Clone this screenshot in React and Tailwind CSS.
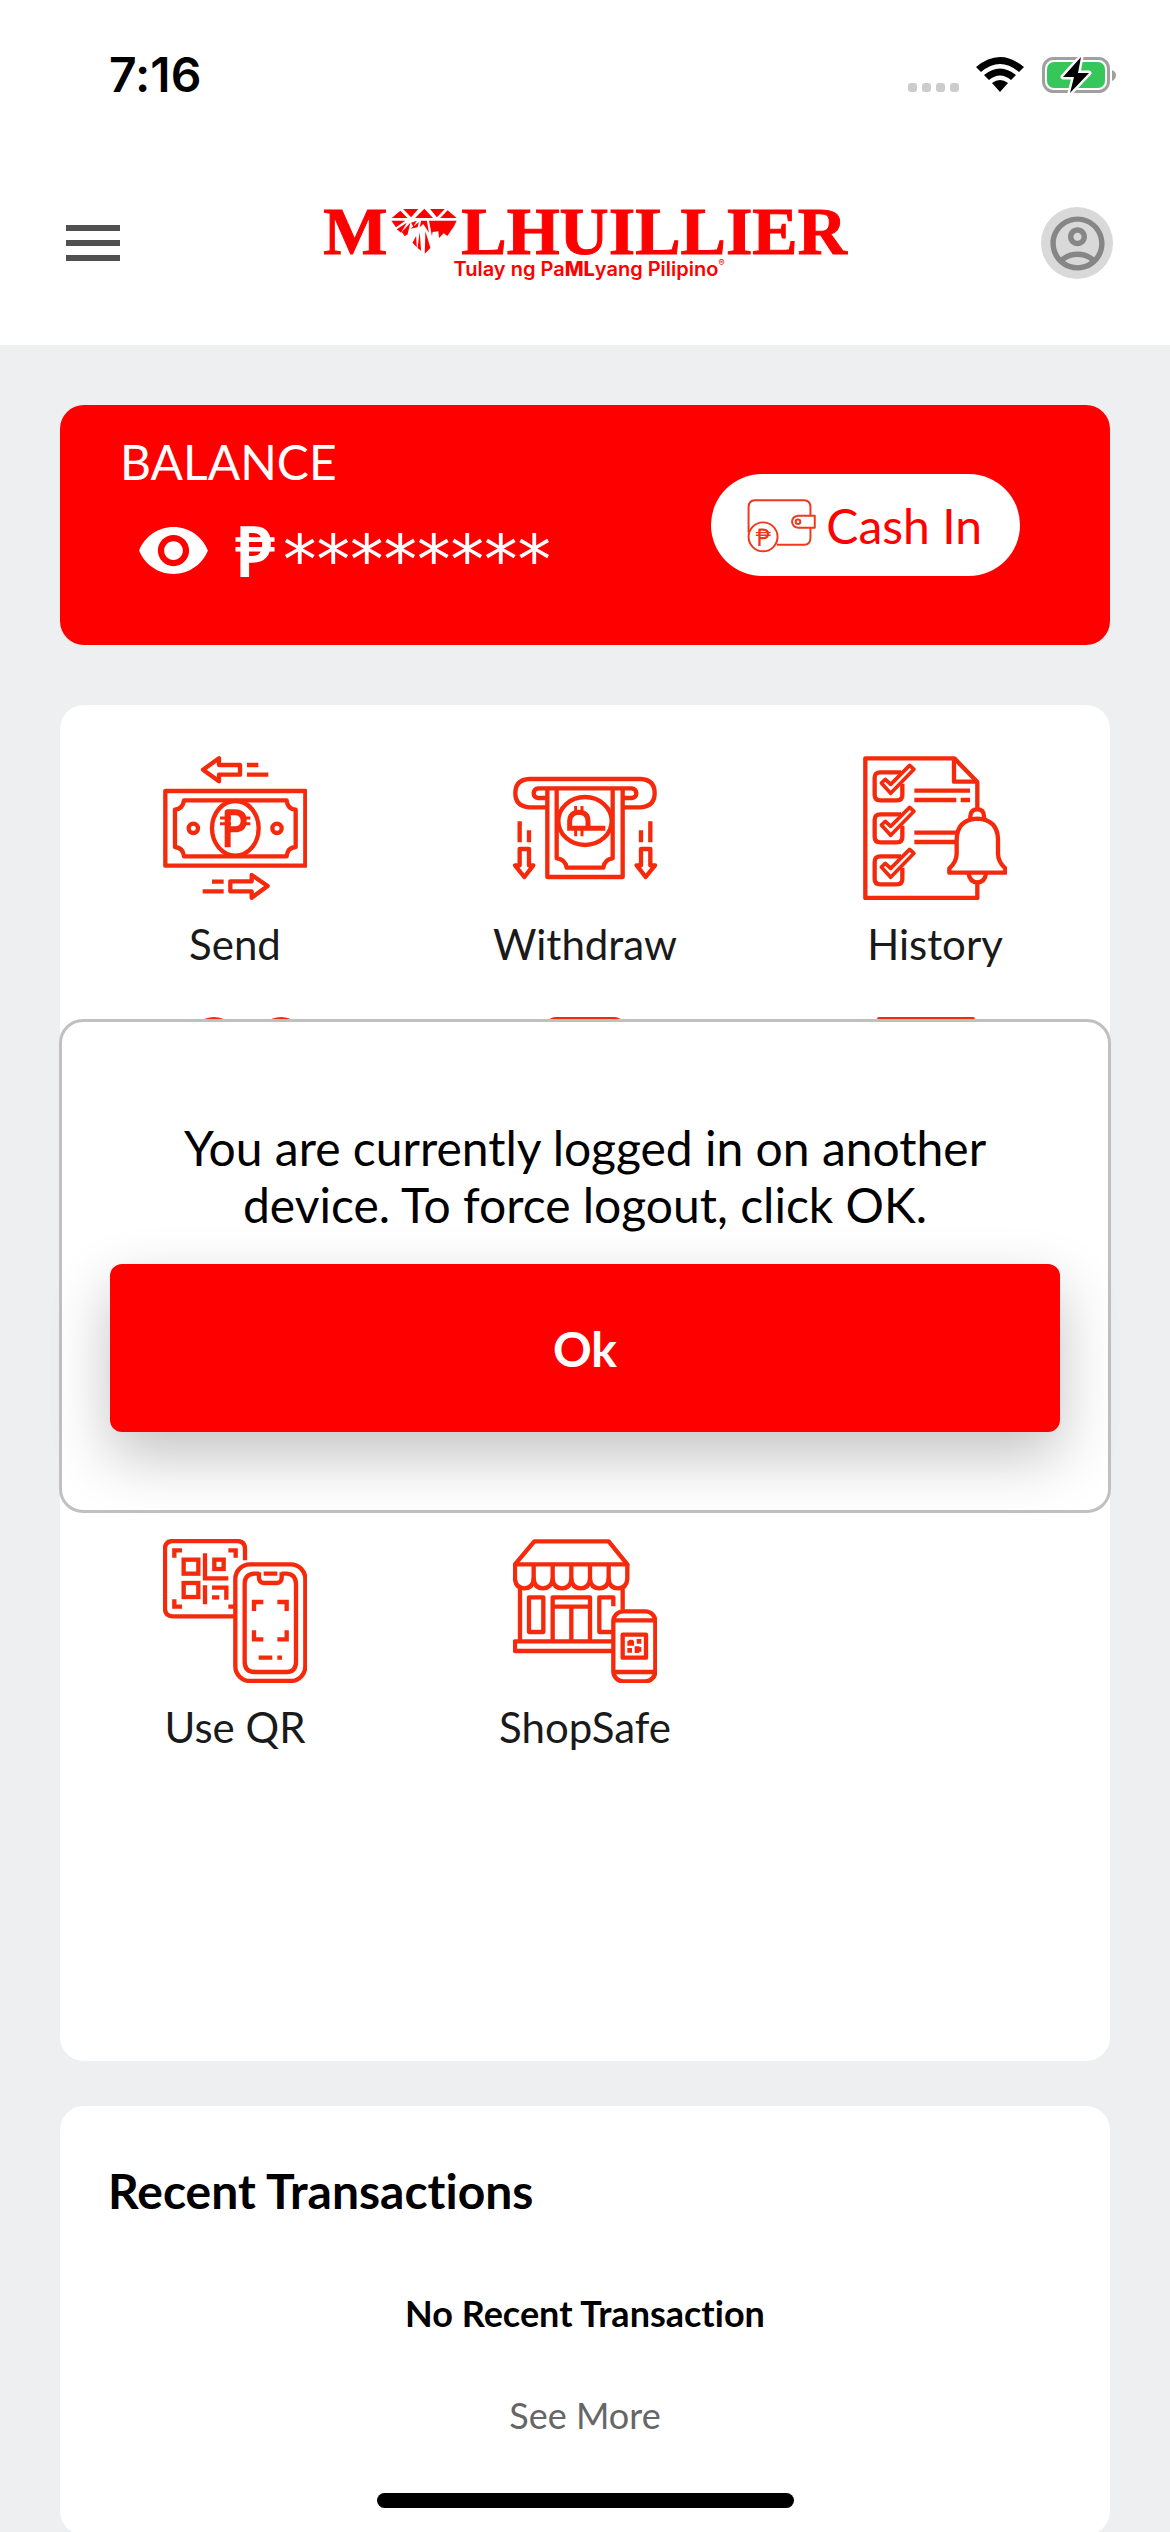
import { MdMenu, MdOutlineAccountCircle, MdVisibility } from "react-icons/md";

const line = {
  fill: "none",
  stroke: "#f52a0c",
  strokeWidth: 13,
  strokeLinejoin: "round",
};

function SendIcon() {
  return (
    <svg viewBox="68 77 432 432" className="size-36" aria-hidden="true" {...line}>
      <path d="M188 118 L236 84 V104 H299 V133 H236 V153 Z" />
      <path d="M320 104 H354 M320 133 H384" />
      <rect x="75" y="182" width="420" height="224" />
      <path d="M131 210 H439 Q441 236 466 238 V350 Q441 352 439 378 H131 Q128 352 104 350 V238 Q128 236 131 210 Z" />
      <ellipse cx="285" cy="294" rx="70" ry="82" />
      <circle cx="159" cy="294" r="14" />
      <circle cx="410" cy="294" r="14" />
      <path strokeWidth="18" d="M262 351 V246 H283 Q310 246 310 272 Q310 297 283 297 H262" />
      <path strokeWidth="9" d="M239 263 H272 M239 280 H272 M302 263 H330 M302 280 H330" />
      <path d="M270 453 H334 V434 L382 467 L334 502 V483 H270 Z" />
      <path d="M215 454 H250 M187 483 H250" />
    </svg>
  );
}

function WithdrawIcon() {
  return (
    <svg viewBox="129 77 432 432" className="size-36" aria-hidden="true" {...line}>
      <path d="M232 231 H178 Q136 228 136 188 Q136 148 178 146 H512 Q554 148 554 188 Q554 228 512 231 H459" />
      <path d="M232 203 H205 Q191 202 191 188 Q192 175 205 174 H485 Q498 175 499 188 Q499 202 485 203 H459" />
      <path d="M232 178 V440 H458 V178 M260 178 V384 Q286 386 290 412 H400 Q404 386 428 384 V178" />
      <ellipse cx="345" cy="272" rx="80" ry="72" />
      <path strokeWidth="15" strokeLinejoin="miter" d="M406 294 H299 V272 Q300 247 327 246 Q354 247 354 272 V294" />
      <path strokeWidth="9" d="M317 227 V246 M336 227 V246 M317 296 V318 M336 296 V318" />
      <path d="M149 273 V336 M177 300 V336 M541 273 V336 M513 300 V336" />
      <path d="M149 356 H177 V405 H190 L163 440 L135 405 H149 Z" />
      <path d="M513 356 H541 V405 H555 L527 440 L500 405 H513 Z" />
    </svg>
  );
}

function HistoryIcon() {
  return (
    <svg viewBox="98 77 432 432" className="size-36" aria-hidden="true" {...line}>
      <path d="M441 236 V155 L372 84 H105 V503 H441 V456" />
      <path d="M371 84 V154 H441" />
      <path d="M252 181 H419 M252 209 H378 M391 209 H419 M252 307 H377 M252 335 H374" />
      {[0, 126, 252].map((y) => (
        <g key={y} transform={`translate(0 ${y})`}>
          <path d="M212 126 H150 Q133 126 133 142 V194 Q133 210 150 210 H200 Q216 210 216 194 V160" />
          <path fill="#fff" strokeWidth="11" d="M153 158 L165 147 L181 162 L238 105 L251 117 L181 189 Z" />
        </g>
      ))}
      <path d="M420 263 V258 Q421 237 441 237 Q461 237 461 258 V263" />
      <path
        fill="#fff"
        d="M357 427 V414 Q379 394 379 370 V326 Q381 268 441 265 Q501 268 503 326 V370 Q503 394 525 414 V427 Z"
      />
      <path d="M415 430 Q418 455 441 456 Q464 455 467 430" />
    </svg>
  );
}

function UseQrIcon() {
  return (
    <svg viewBox="68 86 432 432" className="size-36" aria-hidden="true" {...line}>
      <path d="M314 150 V114 Q313 93 292 92 H96 Q75 93 74 114 V296 Q75 317 96 318 H282" />
      <g strokeLinejoin="miter">
        <path d="M102 142 V120 H125 M264 120 H286 V142 M102 267 V289 H125 M264 289 H282" />
        <rect x="130" y="148" width="44" height="42" />
        <rect x="130" y="218" width="44" height="42" />
        <rect x="222" y="148" width="28" height="28" />
        <path d="M194 129 V204 H264 M194 225 V282 M215 232 H258 V268 M215 261 H237" />
      </g>
      <rect x="285" y="162" width="210" height="350" rx="44" />
      <path d="M356 190 H342 Q313 192 313 220 V456 Q314 484 342 485 H440 Q466 484 467 456 V220 Q466 192 440 190 H424" />
      <path d="M356 186 V204 Q357 217 370 218 H410 Q423 217 424 204 V186 M370 190 H411" />
      <path strokeLinejoin="miter" d="M341 302 V275 H369 M411 275 H439 V302 M341 360 V387 H369 M411 387 H439 V360 M355 442 H396 M411 442 H425" />
    </svg>
  );
}

function ShopSafeIcon() {
  return (
    <svg viewBox="98 86 432 432" className="size-36" aria-hidden="true" {...line}>
      <path d="M104 162 L162 93 H385 L441 162 Z" />
      <path d="M104 162 V206 Q106 233 132 234 Q158 233 160 206 Q162 233 188 234 Q214 233 217 206 Q219 233 245 234 Q271 233 273 206 Q275 233 301 234 Q327 233 329 206 Q331 233 357 234 Q383 233 385 206 Q387 233 413 234 Q439 233 441 206 V162" />
      <path d="M160 162 V210 M217 162 V210 M273 162 V210 M329 162 V210 M385 162 V210" />
      <path d="M119 234 V390 M427 234 V298" />
      <rect x="146" y="261" width="43" height="104" />
      <path d="M217 390 V261 H329 V390 M217 289 H329 M273 289 V390" />
      <path d="M399 288 V261 H357 V365 H396" />
      <path d="M398 393 H104 V422 H398" />
      <rect x="399" y="303" width="126" height="210" rx="30" />
      <path d="M399 330 H525 M399 485 H525" />
      <rect x="427" y="373" width="70" height="69" />
      <path strokeWidth="14" strokeLinejoin="miter" d="M441 399 H461 M469 393 H483 M441 420 H455 M463 417 H483 M452 388 V406 M470 408 V428" />
    </svg>
  );
}

function PeopleIcon() {
  return (
    <svg viewBox="0 0 144 144" className="size-36" aria-hidden="true" {...line} strokeWidth="4">
      <circle cx="51" cy="22" r="20" />
      <circle cx="118" cy="22" r="20" />
      <path d="M20 140 V80 Q20 56 51 56 Q72 56 84 72 Q96 56 118 56 Q142 56 142 80 V140 Z" />
    </svg>
  );
}

function DeviceIcon() {
  return (
    <svg viewBox="0 0 144 144" className="size-36" aria-hidden="true" {...line} strokeWidth="4">
      <rect x="33" y="2" width="78" height="140" rx="10" />
    </svg>
  );
}

function DocumentIcon() {
  return (
    <svg viewBox="0 0 144 144" className="size-36" aria-hidden="true" {...line} strokeWidth="4">
      <rect x="16" y="2" width="94" height="140" />
    </svg>
  );
}

function WalletIcon() {
  return (
    <svg viewBox="145 113 208 164" className="h-[54px] w-[69px]" aria-hidden="true" {...line} stroke="#f0391c" strokeWidth="6">
      <path d="M149 215 V137 Q150 118 168 117 H318 Q336 118 337 137 V164 M337 201 V232 Q336 251 318 252 H235" />
      <circle cx="193" cy="228" r="44" />
      <path d="M350 164 H300 Q282 166 281 182 Q282 198 300 200 H350 Z" />
      <circle cx="299" cy="182" r="7" />
      <path strokeWidth="7" d="M182 256 V206 H194 Q208 207 208 219 Q208 231 194 232 H182" />
      <path strokeWidth="4" d="M171 215 H216 M171 223 H216" />
    </svg>
  );
}

function Diamond() {
  return (
    <svg viewBox="0 0 184 138" className="h-[46px] w-[66px]" preserveAspectRatio="none" fill="#fe0000" aria-hidden="true">
      <path d="M34 3 H76 L56 28 Z M26 8 L46 30 H2 Z M93 2 L117 30 H67 Z M109 3 H150 L128 28 Z M158 7 L183 30 H137 Z" />
      <path d="M1 38 H40 L14 58 Z M106 38 H183 L176 54 L157 84 L147 76 L134 90 L132 70 L116 72 L114 84 Z" />
      <path d="M16 64 L44 44 L28 74 Z M30 72 L54 44 L46 80 L38 84 Z M56 44 L72 38 L62 56 Z M54 62 L78 42 L74 58 Z M84 38 H100 L106 74 L90 48 L80 58 Z" />
      <path d="M96 70 L110 120 L94 137 Z M80 72 L84 128 L74 120 Z M70 84 L72 118 L60 104 Z" />
    </svg>
  );
}

function Logo() {
  return (
    <div className="flex flex-col items-center text-[#fe0000]">
      <div className="flex h-[52px] items-center gap-1 font-['Liberation_Serif',serif] text-[68px] leading-[52px] font-bold [-webkit-text-stroke:1px_#fe0000]">
        <span>M</span>
        <Diamond />
        <span>LHUILLIER</span>
      </div>
      <p className="flex pl-2 font-['Inter',sans-serif] text-[20px] leading-6 font-semibold">
        <span>
          Tulay ng Pa<b className="font-extrabold">ML</b>yang Pilipino
        </span>
        <span className="text-[9px] leading-3 font-normal">®</span>
      </p>
    </div>
  );
}

function StatusBar() {
  return (
    <div className="flex h-[141px] items-center justify-between pt-2 pr-[53px] pl-[109px]">
      <span className="font-['Inter',sans-serif] text-[48px] leading-[58px] font-semibold">7:16</span>
      <div className="flex items-center">
        <div className="flex gap-[5px] self-end pb-[2px]">
          {[0, 1, 2, 3].map((i) => (
            <span key={i} className="size-[9px] rounded-[3px] bg-[#cccccc]" />
          ))}
        </div>
        <svg viewBox="0 0 48 36" className="ml-[17px] h-9 w-12" aria-hidden="true">
          <path d="M0 10 Q24 -10 48 10 L43 15 Q24 -1 5 15 Z" />
          <path d="M8 18 Q24 5 40 18 L35 23 Q24 14 13 23 Z" />
          <path d="M16 26 Q24 20 32 26 L24 35 Z" strokeLinejoin="round" />
        </svg>
        <svg viewBox="0 0 75 38" className="ml-[18px] h-[38px] w-[75px]" aria-hidden="true">
          <rect x="1.500" y="2.500" width="65" height="33" rx="10" fill="none" stroke="#a0a0a0" strokeWidth="3" />
          <path d="M70 14 Q74 16 74 19 Q74 23 70 25 Z" fill="#a0a0a0" />
          <rect x="5" y="6" width="58" height="26" rx="7" fill="#35c759" />
          <path d="M39 1 L21 21 H32 L28 37 L47 17 H36 Z" stroke="#fff" strokeWidth="5" strokeLinejoin="round" />
          <path d="M39 1 L21 21 H32 L28 37 L47 17 H36 Z" />
        </svg>
      </div>
    </div>
  );
}

function Header() {
  return (
    <header className="shrink-0 bg-white">
      <StatusBar />
      <div className="flex h-[204px] items-center justify-between px-[57px]">
        <button type="button" aria-label="Menu" className="text-[#505050]">
          <MdMenu size={72} />
        </button>
        <Logo />
        <button
          type="button"
          aria-label="Account"
          className="flex size-[72px] items-center justify-center rounded-full bg-[#d9d9d9] text-[#868686]"
        >
          <MdOutlineAccountCircle size={65} />
        </button>
      </div>
    </header>
  );
}

function BalanceCard() {
  return (
    <section className="flex items-center justify-between rounded-3xl bg-[#fe0000] pr-[90px] pl-[60px] text-white">
      <div className="pt-7 pb-14">
        <h2 className="text-[48px] leading-[58px]">BALANCE</h2>
        <div className="flex h-[98px] items-center pt-5 pl-4">
          <button type="button" aria-label="Show balance">
            <MdVisibility size={75} />
          </button>
          <p className="flex items-center gap-2 pl-6 leading-[58px]">
            <span className="font-['Noto_Sans',sans-serif] text-[70px] font-semibold">₱</span>
            <span className="pt-5 font-['DejaVu_Sans',sans-serif] text-[67px]">********</span>
          </p>
        </div>
      </div>
      <button
        type="button"
        className="flex h-[102px] items-center gap-[10px] rounded-full bg-white pt-[2px] pr-[38px] pl-9 text-[48px] leading-[58px] text-[#fe0000]"
      >
        <WalletIcon />
        <span>Cash In</span>
      </button>
    </section>
  );
}

function Service({ icon, label, name, className = "" }) {
  return (
    <button
      type="button"
      aria-label={name}
      className={`flex flex-col items-center gap-[19px] text-[42px] leading-[50px] text-[#1a1a1a] ${className}`}
    >
      {icon}
      {label && <span>{label}</span>}
    </button>
  );
}

function Services() {
  return (
    <section className="mt-[60px] grid grid-cols-3 grid-rows-[repeat(5,261px)] items-start rounded-3xl bg-white pt-[51px]">
      <Service icon={<SendIcon />} label="Send" />
      <Service icon={<WithdrawIcon />} label="Withdraw" />
      <Service icon={<HistoryIcon />} label="History" />
      <Service icon={<PeopleIcon />} name="Service 4" />
      <Service icon={<DeviceIcon />} name="Service 5" />
      <Service icon={<DocumentIcon />} name="Service 6" />
      <Service icon={<UseQrIcon />} label="Use QR" className="row-start-4" />
      <Service icon={<ShopSafeIcon />} label="ShopSafe" className="row-start-4" />
    </section>
  );
}

function RecentTransactions() {
  return (
    <section className="mt-[45px] flex flex-col rounded-3xl bg-white px-12 pt-14 pb-[98px]">
      <h2 className="text-[48px] leading-[58px] font-bold">Recent Transactions</h2>
      <p className="mt-[71px] text-center text-[36px] leading-[44px] font-bold">No Recent Transaction</p>
      <a href="#transactions" className="mt-[58px] self-center text-[36px] leading-[44px] text-[#666666]">
        See More
      </a>
    </section>
  );
}

function LogoutDialog() {
  return (
    <div className="fixed inset-0 flex items-center px-[59px]">
      <div
        role="alertdialog"
        aria-modal="true"
        aria-labelledby="logout-message"
        className="w-full rounded-3xl border-[3px] border-[#c0c0c0] bg-white px-12 pt-[97px] pb-[78px] text-center"
      >
        <p id="logout-message" className="mx-auto max-w-[860px] text-[48px] leading-[57px]">
          You are currently logged in on another device. To force logout, click OK.
        </p>
        <button
          type="button"
          className="mt-[31px] h-[168px] w-full rounded-xl bg-[#fe0000] pt-[2px] text-[48px] leading-[58px] font-bold text-white shadow-[0_24px_60px_rgba(0,0,0,0.24)]"
        >
          Ok
        </button>
      </div>
    </div>
  );
}

export default function App() {
  return (
    <div className="flex h-screen flex-col overflow-hidden bg-[#eeeff1] font-['Lato',sans-serif] text-black [font-variant-ligatures:none]">
      <Header />
      <main className="min-h-0 flex-1 overflow-hidden px-[60px] pt-[60px]">
        <BalanceCard />
        <Services />
        <RecentTransactions />
      </main>
      <LogoutDialog />
      <div className="fixed inset-x-0 bottom-6 flex justify-center">
        <div className="h-[15px] w-[417px] rounded-full bg-black" />
      </div>
    </div>
  );
}
